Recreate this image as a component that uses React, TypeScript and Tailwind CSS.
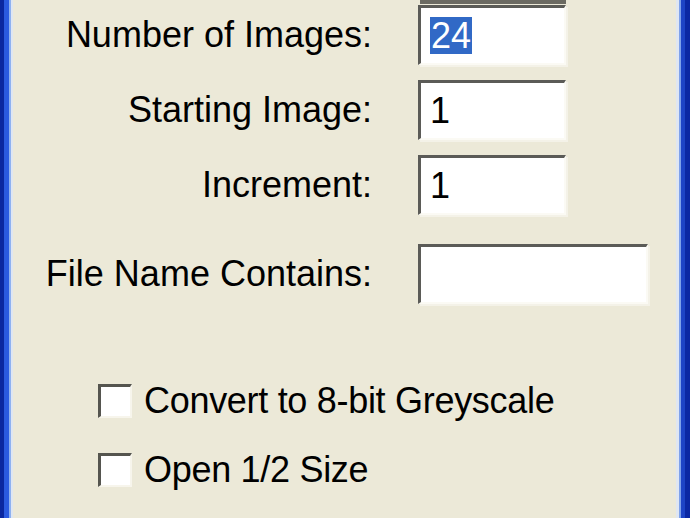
const font = { fontFamily: '"Liberation Sans", Arial, sans-serif' };

function Field({ label, value, selected, wide }: { label: string; value?: string; selected?: boolean; wide?: boolean }) {
  return (
    <div className="flex items-center">
      <div className="w-[359px] shrink-0 text-right text-[36px] leading-none tracking-[0px] text-black">
        {label}
      </div>
      <div
        className={`ml-[46px] flex h-[60px] items-center border-t-[3px] border-l-[3px] border-b-2 border-r-2 border-t-[#5b5b57] border-l-[#5b5b57] border-b-[#fbfaf4] border-r-[#fbfaf4] bg-white pl-[9px] shadow-[2px_2px_0_#f4f2e8] ${
          wide ? "w-[230px]" : "w-[148px]"
        }`}
      >
        {value && (
          <span
            className={`text-[36px] leading-[37px] ${
              selected ? "bg-[#3169c6] px-[1px] text-white" : "text-black"
            }`}
          >
            {value}
          </span>
        )}
      </div>
    </div>
  );
}

function Check({ label }: { label: string }) {
  return (
    <div className="flex items-center">
      <div className="h-[34px] w-[34px] border-t-[3px] border-l-[3px] border-b-2 border-r-2 border-t-[#55554f] border-l-[#55554f] border-b-[#f7f5ec] border-r-[#f7f5ec] bg-white" />
      <span className="ml-[12px] text-[36px] leading-none tracking-[-0.3px] text-black">{label}</span>
    </div>
  );
}

export default function App() {
  return (
    <div className="flex h-[518px] w-[690px] overflow-hidden bg-[#ece9d8]" style={font}>
      {/* left window frame */}
      <div className="flex w-[13px] shrink-0">
        <div className="w-[4px] bg-[#0a27a0]" />
        <div className="w-[5px] bg-[#2a5ae0]" />
        <div className="w-[2px] bg-[#8fb2f0]" />
        <div className="w-[2px] bg-[#dfe6f2]" />
      </div>

      <div className="flex-1">
        {/* bottom edge of the field above */}
        <div className="ml-[407px] h-[4px] w-[146px] bg-[#6b6a62]" />

        <div className="mt-[1px] flex flex-col gap-[15px]">
          <Field label="Number of Images:" value="24" selected />
          <Field label="Starting Image:" value="1" />
          <Field label="Increment:" value="1" />
          <div className="mt-[14px]">
            <Field label="File Name Contains:" wide />
          </div>
        </div>

        <div className="ml-[85px] mt-[79px] flex flex-col gap-[33px]">
          <Check label="Convert to 8-bit Greyscale" />
          <Check label="Open 1/2 Size" />
        </div>
      </div>

      {/* right window frame */}
      <div className="flex w-[14px] shrink-0">
        <div className="w-[3px] bg-[#dfe6f2]" />
        <div className="w-[2px] bg-[#7fa2ea]" />
        <div className="w-[4px] bg-[#1d44c6]" />
        <div className="w-[5px] bg-[#0b28a4]" />
      </div>
    </div>
  );
}
